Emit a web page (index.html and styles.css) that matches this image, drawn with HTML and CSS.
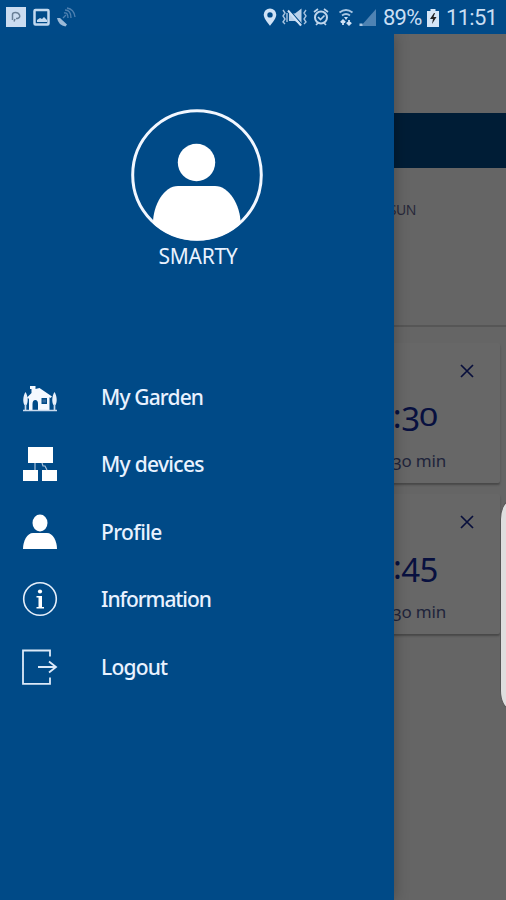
FILE: index.html
```html
<!DOCTYPE html>
<html lang="en">
<head>
<meta charset="utf-8">
<title>My Garden</title>
<link rel="stylesheet" href="styles.css">
</head>
<body>
<div class="screen">
  <header class="status">
    <svg class="left-icons" width="80" height="34" viewBox="0 0 80 34">
      <rect x="6" y="7" width="20" height="20" fill="#cbdcf0"/>
      <path d="M12.500 20V14.500q0-2 3-2t4 2.500-2 3.500h-1.500M14 21.500l1-2.500" fill="none" stroke="#697f96" stroke-width="1.500"/>
      <rect x="34.500" y="10" width="14" height="14.500" rx="1" fill="none" stroke="#c3d9ef" stroke-width="2.500"/>
      <path d="M37 20l3-2 2 1 2-2 3 3v2H37z" fill="#c3d9ef"/>
      <path d="M57 18l3 0 7 6.500-1.500 2q-7-1-8.500-8.500z" fill="#9bbad8"/>
      <path d="M63 18l3-3M64 13q4-1 4 5M65 10q6 0 6 8M67 8q7 1 8 9" fill="none" stroke="#4f81b1" stroke-width="1.300"/>
    </svg>
    <svg class="right-icons" width="118" height="34" viewBox="260 0 118 34">
      <path fill-rule="evenodd" d="M270 8.500a6.300 6.300 0 0 0-6.300 6.300c0 4 6.300 11 6.300 11s6.300-7 6.300-11a6.300 6.300 0 0 0-6.300-6.300zm0 3.700a2.700 2.700 0 1 1 0 5.400 2.700 2.700 0 0 1 0-5.400z" fill="#cfe2f6"/>
      <path d="M289 13.500h6l6.500-5v17l-6.500-4.500h-6z" fill="#b9d1ea"/>
      <path d="M289 9.500l13 15" stroke="#004a88" stroke-width="1.200"/>
      <path d="M288 10.500l13 15" stroke="#cfe2f6" stroke-width="2"/>
      <path d="M283 10l2 3-2 3 2 3-2 3 2 2M287 13v9M306 10l-2 3 2 3-2 3 2 3-2 2" fill="none" stroke="#a8c4e0" stroke-width="1.400"/>
      <circle cx="321" cy="17.500" r="6" fill="none" stroke="#bed5ec" stroke-width="2"/>
      <path d="M314 12l4-3M328 12l-4-3M318 17l2.500 2.500 4-4M316 25l2-2M326 25l-2-2" fill="none" stroke="#bed5ec" stroke-width="1.700"/>
      <path d="M339.500 12.500q6.500-5 13 0M342 15.500q4-3 8 0" fill="none" stroke="#a8c6e3" stroke-width="1.800"/>
      <path d="M344 17h4l-2 3z" fill="#cfe2f6"/>
      <path d="M343 25v-4M340.800 22.500l2.200-2.200 2.200 2.200M349 20v4.500M346.800 22.500l2.200 2.200 2.200-2.200" fill="none" stroke="#cfe2f6" stroke-width="1.800"/>
      <path d="M376 9v17h-15z" fill="#4f83b3"/><path d="M359.500 23.500h3v2.500h-3z" fill="#a8c6e3"/>
    </svg>
    <span class="percent">89%</span>
    <svg class="battery" width="12" height="18" viewBox="0 0 12 18"><path d="M3.500 2V0h5v2H12v16H0V2z" fill="#d6e6f7"/><path d="M7 4l-4 6h3l-1 5 4.500-7h-3l1.500-4z" fill="#222"/></svg>
    <span class="clock">11:51</span>
  </header>
  <main class="page">
    <div class="toolbar"></div>
    <div class="band"></div>
    <section class="days"><span class="day">SUN</span></section>
    <section class="cards">
      <article class="card">
        <svg class="close" width="14" height="14" viewBox="0 0 14 14"><path d="M1 1l12 12M13 1L1 13"/></svg>
        <div class="time">:<span class="low">3</span><span class="small-zero">0</span></div>
        <div class="duration"><span class="low">3</span><span class="old-zero">o</span> min</div>
      </article>
      <article class="card second">
        <svg class="close" width="14" height="14" viewBox="0 0 14 14"><path d="M1 1l12 12M13 1L1 13"/></svg>
        <div class="time">:<span class="low">45</span></div>
        <div class="duration"><span class="low">3</span><span class="old-zero">o</span> min</div>
      </article>
    </section>
  </main>
  <aside class="drawer">
    <div class="profile">
      <svg width="132" height="132" viewBox="0 0 132 132">
        <defs><clipPath id="disc"><circle cx="66" cy="66" r="65.500"/></clipPath></defs>
        <circle cx="66" cy="66" r="64.300" fill="none" stroke="#f2f7ff" stroke-width="3"/>
        <g clip-path="url(#disc)" fill="#fff"><circle cx="65.500" cy="53.500" r="18.700"/><path d="M22 132V114C22 96 33 77 47 77H84C98 77 109.500 96 109.500 114V132z"/></g>
      </svg>
      <div class="name">SMARTY</div>
    </div>
    <nav class="menu">
      <a class="item"><svg class="icon" viewBox="0 0 36 36"><path fill-rule="evenodd" fill="#f5f9ff" d="M9.500 14V10H8V7h5.500v3l4-1L30 17.500l-1.500 1.500-1-.8V31H16v-6q0-4-2.700-4T10.500 25v6H7V19l-1 1-1-1.500zM19.500 19v6h5.500v-6z"/><path d="M20.500 20.500h3.500v3h-3.500z" fill="#30689d"/><path d="M3.500 13c-2.500 4-3 10-1 13h2c2-3 1.500-9-1-13zM32.500 13c-2.500 4-3 10-1 13h2c2-3 1.500-9-1-13z" fill="#e7f0fb"/><path d="M3.500 25v6M32.500 25v6M1 31.500h34" stroke="#c9daed" stroke-width="1.700"/></svg><span class="l1">My Garden</span></a>
      <a class="item"><svg class="icon" viewBox="0 0 36 36"><path d="M6 1h25v16H6zM1 24h15v11H1zM20 24h15v11H20z" fill="#fff"/><path d="M13 17v7M20 17l1 3h2l2 4" fill="none" stroke="#a9c1da" stroke-width="1.200"/></svg><span class="l2">My devices</span></a>
      <a class="item"><svg class="icon" viewBox="0 0 36 36"><ellipse cx="18" cy="9" rx="7.500" ry="8.500" fill="#fff"/><path d="M1 35C1 27 5 19 11 19H25C31 19 35 27 35 35z" fill="#fff"/></svg><span class="l3">Profile</span></a>
      <a class="item"><svg class="icon" viewBox="0 0 36 36"><circle cx="18" cy="18" r="16.300" fill="none" stroke="#e5effb" stroke-width="1.600"/><circle cx="18" cy="10.500" r="2.100" fill="#fff"/><path d="M14.500 15H20V26h2v1.500h-7.500V26h2V16.500h-2z" fill="#fff"/></svg><span class="l4">Information</span></a>
      <a class="item"><svg class="icon" viewBox="0 0 36 36"><path d="M28 7.500V1.500H1v33.300h27V28.500M16 18h18M27 12.500l7 5.500-7 5.500" fill="none" stroke="#dce9f8" stroke-width="1.800"/></svg><span class="l5">Logout</span></a>
    </nav>
  </aside>
  <div class="edge-handle"></div>
</div>
</body>
</html>
```
FILE: styles.css
```css
body { margin: 0; }
.screen {
  position: relative;
  width: 506px;
  height: 900px;
  overflow: hidden;
  background: #656565;
  font-family: "Noto Sans", sans-serif;
}
.status {
  display: flex;
  align-items: center;
  height: 34px;
  background: #004a88;
  color: #c9def3;
  font: 22px/34px Roboto, sans-serif;
}
.left-icons { margin-right: 180px; }
.percent { width: 44px; margin: 2px 0 0 5px; letter-spacing: -0.8px; }
.battery { margin: 2px 7px 0 0; }
.clock { margin-top: 2px; white-space: nowrap; letter-spacing: -0.7px; }
.toolbar { height: 79px; }
.band { height: 55px; background: #001d36; }
.days {
  display: flex;
  justify-content: flex-end;
  height: 157px;
  border-bottom: 2px solid #565656;
}
.day { margin: 32px 90px 0 0; color: #27283a; font-size: 14px; line-height: 20px; letter-spacing: -0.4px; }
.cards { padding: 16px 6px 0; }
.card {
  display: flex;
  flex-direction: column;
  align-items: flex-end;
  height: 140px;
  margin-bottom: 11px;
  border-radius: 2px;
  background: #676767;
  box-shadow: 0 2px 2px #484848;
}
.close { margin: 21px 26px 0 0; fill: none; stroke: #080f3c; stroke-width: 1.7; }
.time { margin: 18px 63px 0 0; color: #08103f; font-size: 33px; line-height: 40px; letter-spacing: -0.5px; }
.second .time { margin-right: 62px; }
.time .low { transform: translateY(3px); }
.time .small-zero { margin-left: -1px; }
.duration { margin: 13px 54px 0 0; color: #20243b; font-size: 17px; line-height: 24px; letter-spacing: -0.2px; }
.low { display: inline-block; transform: translateY(3px); }
.small-zero { display: inline-block; transform: translateY(1px) scale(1.04, 0.76); }
.drawer {
  position: absolute;
  top: 34px;
  left: 0;
  width: 394px;
  height: 866px;
  background: #004a87;
  box-shadow: 0 0 14px rgba(0, 0, 0, .3);
  clip-path: inset(0 -24px 0 0);
  color: #e9f2ff;
}
.profile { display: flex; flex-direction: column; align-items: center; height: 254px; padding: 75px 0 0; }
.profile svg { margin: 0 0 0 -1px; }
.name { margin-left: 2px; font-size: 21px; line-height: 30px; letter-spacing: -0.3px; }
.menu { display: grid; grid-auto-rows: 67.5px; }
.item { display: flex; align-items: center; gap: 43px; padding-left: 22px; font-size: 21px; font-weight: 500; }
.icon { width: 36px; height: 36px; }
.item span { white-space: nowrap; }
.l1 { letter-spacing: -0.85px; }
.l2 { letter-spacing: -0.7px; }
.l3 { letter-spacing: -0.6px; }
.l4 { letter-spacing: -1.05px; }
.l5 { letter-spacing: -0.8px; }
.edge-handle {
  position: absolute;
  top: 500px;
  left: 500px;
  width: 20px;
  height: 208px;
  border: 1px solid #555;
  border-radius: 16px / 28px;
  background: #dedede;
}
```
